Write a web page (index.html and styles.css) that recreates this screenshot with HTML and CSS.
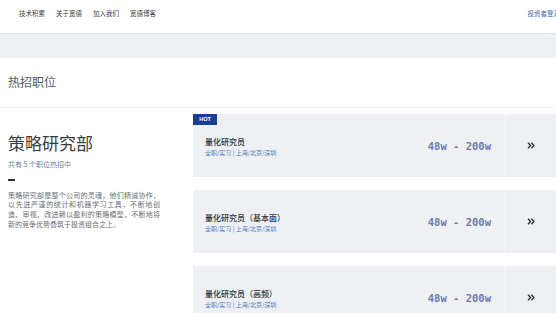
FILE: index.html
```html
<!DOCTYPE html>
<html lang="zh-CN">

<head>
    <meta charset="UTF-8">
    <meta name="viewport" content="width=device-width, initial-scale=1.0">
    <title>热招职位</title>
    <link rel="stylesheet" href="styles.css">
</head>

<body>

    <header class="topbar">
        <nav class="nav">
            <a href="#">技术积累</a>
            <a href="#">关于宽德</a>
            <a href="#">加入我们</a>
            <a href="#">宽德博客</a>
        </nav>
        <a href="#" class="login">投资者登录</a>
    </header>

    <div class="band"></div>

    <h2 class="section-title">热招职位</h2>

    <main class="jobs">
        <div class="dept">
            <h1 class="dept-name">策略研究部</h1>
            <p class="dept-count">共有 5 个职位热招中</p>
            <div class="dash"></div>
            <p class="dept-desc">策略研究部是整个公司的灵魂，他们精诚协作，以先进严谨的统计和机器学习工具，不断地创造、审视、改进赖以盈利的策略模型，不断地将新的竞争优势叠筑于投资组合之上。</p>
        </div>

        <div class="job-list">
            <div class="job">
                <span class="hot">HOT</span>
                <div class="job-info">
                    <div class="job-title">量化研究员</div>
                    <div class="job-meta">全职/实习 | 上海/北京/深圳</div>
                </div>
                <div class="salary">48w - 200w</div>
                <div class="more">
                    <svg width="8" height="7" viewBox="0 0 8 7"><path d="M1 0.8 L3.6 3.5 L1 6.2 M4.4 0.8 L7 3.5 L4.4 6.2" fill="none" stroke="#2b2f36" stroke-width="1.3"/></svg>
                </div>
            </div>
            <div class="job">
                <div class="job-info">
                    <div class="job-title">量化研究员（基本面）</div>
                    <div class="job-meta">全职/实习 | 上海/北京/深圳</div>
                </div>
                <div class="salary">48w - 200w</div>
                <div class="more">
                    <svg width="8" height="7" viewBox="0 0 8 7"><path d="M1 0.8 L3.6 3.5 L1 6.2 M4.4 0.8 L7 3.5 L4.4 6.2" fill="none" stroke="#2b2f36" stroke-width="1.3"/></svg>
                </div>
            </div>
            <div class="job">
                <div class="job-info">
                    <div class="job-title">量化研究员（高频）</div>
                    <div class="job-meta">全职/实习 | 上海/北京/深圳</div>
                </div>
                <div class="salary">48w - 200w</div>
                <div class="more">
                    <svg width="8" height="7" viewBox="0 0 8 7"><path d="M1 0.8 L3.6 3.5 L1 6.2 M4.4 0.8 L7 3.5 L4.4 6.2" fill="none" stroke="#2b2f36" stroke-width="1.3"/></svg>
                </div>
            </div>
        </div>
    </main>

</body>

</html>
```

FILE: styles.css
```css
body {
    font-family: 'Noto Sans CJK SC', 'Noto Sans', sans-serif;
    background-color: #ffffff;
    color: #333333;
    margin: 0;
    padding: 0;
    overflow: hidden;
}

a {
    text-decoration: none;
}

.topbar {
    height: 33px;
    display: flex;
    align-items: center;
    padding-left: 19px;
    margin-top: -4px;
}

.nav {
    display: flex;
    gap: 11px;
}

.nav a {
    font-size: 6.5px;
    color: #3a3d42;
}

.login {
    margin-left: auto;
    margin-right: -4px;
    font-size: 6.5px;
    color: #4a6aa8;
}

.band {
    height: 24px;
    margin-top: 4px;
    background-color: #eef0f2;
    border-top: 1px solid #e4e7ea;
}

.section-title {
    margin: 0;
    padding: 15px 8px 0;
    height: 34px;
    font-size: 12px;
    font-weight: 400;
    color: #555a60;
    border-bottom: 1px solid #f1f2f4;
}

.jobs {
    display: flex;
    padding-left: 8px;
}

.dept {
    width: 152px;
    flex-shrink: 0;
    padding-top: 24px;
    margin-right: 33px;
}

.dept-name {
    margin: 0;
    font-size: 17px;
    font-weight: 400;
    line-height: 22px;
    color: #3a3d42;
}

.dept-count {
    margin: 5px 0 0;
    font-size: 7px;
    color: #6f7e95;
}

.dash {
    width: 7px;
    height: 1.5px;
    margin-top: 10px;
    background-color: #333333;
}

.dept-desc {
    margin: 10px 0 0;
    font-size: 7px;
    line-height: 9.8px;
    color: #6a6e74;
    text-align: justify;
}

.job-list {
    flex: 1;
    display: flex;
    flex-direction: column;
    gap: 13px;
    padding-top: 6px;
}

.job {
    position: relative;
    height: 63px;
    display: flex;
    align-items: center;
    background-color: #eef0f3;
}

.hot {
    position: absolute;
    top: 0;
    left: 0;
    width: 24px;
    height: 11px;
    line-height: 11px;
    text-align: center;
    background-color: #1b3d8f;
    color: #ffffff;
    font-family: 'Liberation Sans', Arial, sans-serif;
    font-size: 5.5px;
    font-weight: bold;
}

.job-info {
    flex: 1;
    padding-left: 12px;
    padding-top: 2px;
}

.job-title {
    font-size: 8px;
    line-height: 11px;
    font-weight: 500;
    color: #2f3338;
}

.job-meta {
    margin-top: 1px;
    font-size: 6px;
    color: #4a78bf;
}

.salary {
    padding-right: 13px;
    font-family: 'DejaVu Sans Mono', 'Liberation Mono', monospace;
    font-size: 10.5px;
    font-weight: bold;
    color: #6a7daa;
}

.more {
    width: 51px;
    height: 100%;
    display: flex;
    align-items: center;
    justify-content: center;
    border-left: 1px solid #f4f5f7;
}
```
